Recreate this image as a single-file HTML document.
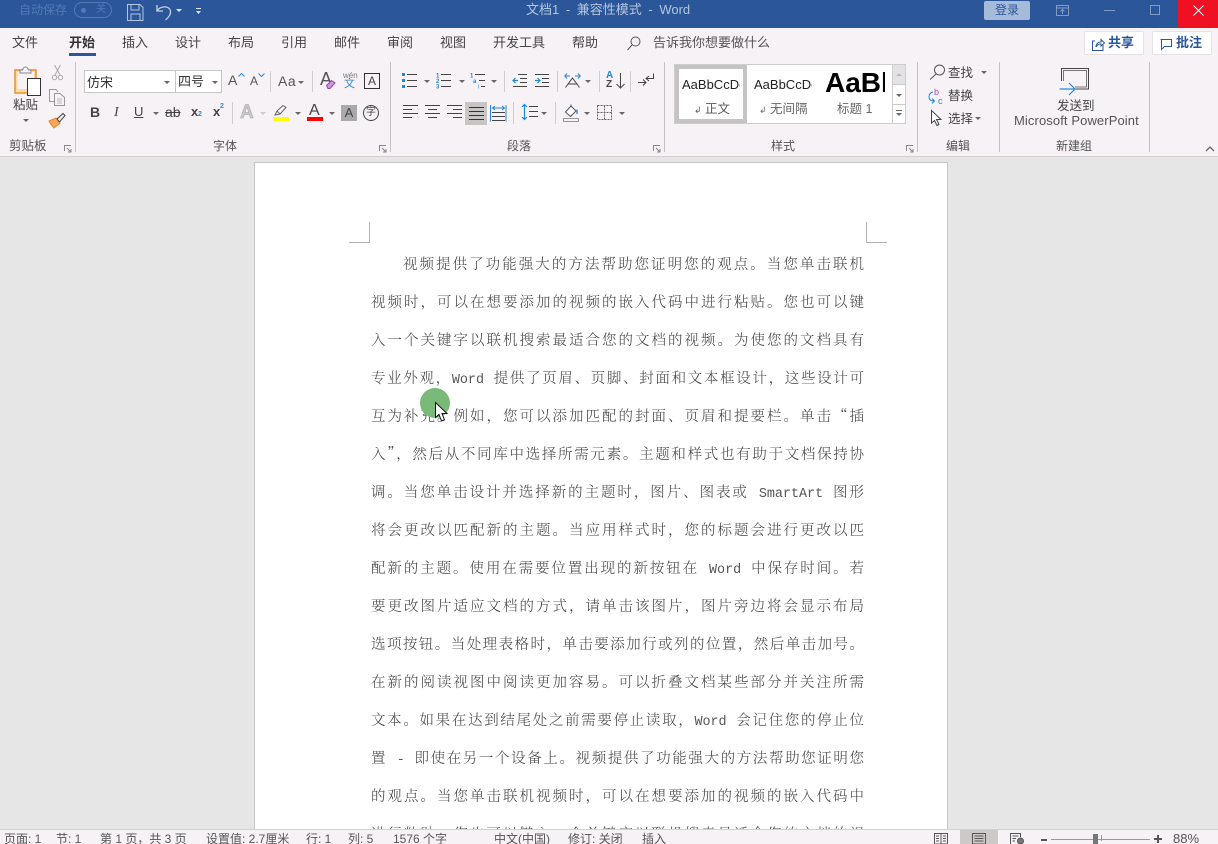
<!DOCTYPE html>
<html lang="zh"><head><meta charset="utf-8"><title>Word</title>
<style>
*{box-sizing:border-box}
html,body{margin:0;padding:0;width:1218px;height:844px;overflow:hidden;background:#e6e6e6}
body{position:relative;font-family:"Liberation Sans","Noto Sans CJK SC",sans-serif;color:#444}
.a{position:absolute;white-space:nowrap}
.t{position:absolute;white-space:nowrap;font-size:12.500px;line-height:16px;color:#444}
.tab{position:absolute;top:34px;font-size:13px;line-height:17px;color:#444;white-space:nowrap}
.sep{position:absolute;top:62px;height:90px;width:1px;background:#c6c2c2}
.s2{position:absolute;width:1px;background:#d0cccc}
.l{position:absolute;left:371px;width:494px;height:20px;line-height:20px;font-family:"Noto Serif CJK SC",serif;font-size:14.500px;color:#444;text-align:justify;text-align-last:justify;white-space:nowrap;font-weight:300}
.m{font-family:"Liberation Mono",monospace;font-size:13.400px;color:#555;font-weight:400}
svg{position:absolute;overflow:visible}
.st{position:absolute;top:832px;font-size:12px;line-height:14px;color:#555;white-space:nowrap}
.gl{position:absolute;top:138px;font-size:12px;line-height:16px;color:#555}
.car{position:absolute;width:0;height:0;border-left:3px solid transparent;border-right:3px solid transparent;border-top:3px solid #666}
</style></head><body>

<!-- title bar -->
<div class="a" style="left:0;top:0;width:1218px;height:28px;background:#2b579a"></div>
<div class="a" style="left:19px;top:2px;font-size:12px;line-height:16px;color:#5279b4">自动保存</div>
<div class="a" style="left:74px;top:2px;width:38px;height:16px;border:1px solid #5279b4;border-radius:8px"></div>
<div class="a" style="left:81px;top:8px;width:5px;height:5px;border-radius:50%;background:#5279b4"></div>
<div class="a" style="left:96px;top:3px;font-size:10px;line-height:14px;color:#5279b4">关</div>
<svg style="left:127px;top:4px" width="17" height="17" fill="none" stroke="#b4c5de" stroke-width="1"><path d="M.5.5H13L16 3.500V16.500H.5Z"/><path d="M4 .5V6H12V.5M4 16.500V10H13V16.500"/></svg>
<svg style="left:156px;top:3px" width="18" height="18" fill="none" stroke="#c3d0e4" stroke-width="1.300"><path d="M1 2V8H7M1 8C4 3 13 2 14.500 8C15 12 12 15 9.500 17"/></svg>
<div class="car" style="left:176px;top:9px;border-top-color:#dfe6f0"></div>
<svg style="left:195px;top:7px" width="8" height="8" fill="#dfe6f0"><rect x="1" y="1" width="5" height="1"/><path d="M1 4H6L3.500 7Z"/></svg>
<div class="a" style="left:526px;top:1px;font-size:13px;line-height:18px;color:#b4c5de;word-spacing:3px">文档1 - 兼容性模式 - Word</div>
<div class="a" style="left:984px;top:1px;width:46px;height:19px;background:#a6bbd9;border-radius:2px;text-align:center;font-size:12px;line-height:19px;color:#2b579a">登录</div>
<svg style="left:1056px;top:5px" width="14" height="11" fill="none" stroke="#7f9cc6"><path d="M.5.5H12.500V10.500H.5ZM.5 3H12.500M6.500 9V4.500M4.500 6.500L6.500 4.500L8.500 6.500"/></svg>
<div class="a" style="left:1104px;top:10px;width:11px;height:1px;background:#7f9cc6"></div>
<div class="a" style="left:1150px;top:5px;width:10px;height:10px;border:1px solid #7f9cc6"></div>
<div class="a" style="left:1178px;top:0;width:40px;height:28px;background:#f01024"></div>
<svg style="left:1193px;top:5px" width="11" height="11" stroke="#fff" stroke-width="1"><path d="M.5.5L10.500 10.500M10.500.5L.5 10.500"/></svg>

<!-- ribbon -->
<div class="a" style="left:0;top:28px;width:1218px;height:128px;background:#f6f2f6"></div>
<div class="a" style="left:0;top:156px;width:1218px;height:1px;background:#d4d0d0"></div>

<div class="tab" style="left:12px">文件</div>
<div class="tab" style="left:69px;font-weight:700;color:#333">开始</div>
<div class="a" style="left:69px;top:53px;width:27px;height:3px;background:#2b579a"></div>
<div class="tab" style="left:122px">插入</div>
<div class="tab" style="left:175px">设计</div>
<div class="tab" style="left:228px">布局</div>
<div class="tab" style="left:281px">引用</div>
<div class="tab" style="left:334px">邮件</div>
<div class="tab" style="left:387px">审阅</div>
<div class="tab" style="left:440px">视图</div>
<div class="tab" style="left:493px">开发工具</div>
<div class="tab" style="left:572px">帮助</div>
<svg style="left:627px;top:36px" width="14" height="15" fill="none" stroke="#555"><circle cx="8.500" cy="5.500" r="4.500"/><path d="M5 9L.5 14"/></svg>
<div class="tab" style="left:653px;color:#555">告诉我你想要做什么</div>

<div class="a" style="left:1084px;top:31px;width:60px;height:24px;background:#fff;border:1px solid #e6e2e6;border-radius:2px"></div>
<svg style="left:1092px;top:38px" width="13" height="13" fill="none" stroke="#2b579a"><path d="M3 3H.5V12.500H11V7"/><path d="M4 9C4 6 6 4 9 4V1.500L12.500 5L9 8V6C7 6 5 7 4 9Z"/></svg>
<div class="a" style="left:1108px;top:34px;font-size:13px;line-height:17px;font-weight:700;color:#2b579a">共享</div>
<div class="a" style="left:1152px;top:31px;width:60px;height:24px;background:#fff;border:1px solid #e6e2e6;border-radius:2px"></div>
<svg style="left:1160px;top:39px" width="12" height="11" fill="none" stroke="#2b579a"><path d="M.5.5H11.500V7.500H4.500L1.500 10.500V.5"/></svg>
<div class="a" style="left:1176px;top:34px;font-size:13px;line-height:17px;font-weight:700;color:#2b579a">批注</div>

<!-- separators -->
<div class="sep" style="left:75px"></div>
<div class="sep" style="left:390px"></div>
<div class="sep" style="left:664px"></div>
<div class="sep" style="left:917px"></div>
<div class="sep" style="left:999px"></div>
<div class="sep" style="left:1149px"></div>

<!-- clipboard -->
<svg style="left:14px;top:66px" width="28" height="30" fill="none">
<path d="M1 4H22V27H1Z" fill="#fbd9a5" stroke="#ec8f2d" stroke-width="1.500"/><path d="M3.500 6H20V23H3.500Z" fill="#f6f2f6"/>
<path d="M6 7V4H8.500Q9.500 1 11.500 1Q13.500 1 14.500 4H17V7Z" fill="#f6f2f6" stroke="#888"/>
<rect x="13.500" y="12.500" width="13" height="17" fill="#fff" stroke="#333"/></svg>
<div class="t" style="left:13px;top:97px;font-size:12.500px">粘贴</div>
<div class="car" style="left:23px;top:119px"></div>
<svg style="left:52px;top:65px" width="11" height="16" fill="none" stroke="#aaa"><path d="M2.500 0L8 10M8.500 0L3 10"/><circle cx="2.500" cy="12.500" r="2.200"/><circle cx="8.500" cy="12.500" r="2.200"/></svg>
<svg style="left:49px;top:89px" width="17" height="17" fill="none" stroke="#999"><path d="M5 12.500H.5V.5H7L9 3"/><path d="M5.500 4.500H11L15.500 8.500V16.500H5.500Z"/><path d="M8 10H13M8 12H13M8 14H13" stroke="#bbb"/></svg>
<svg style="left:49px;top:113px" width="17" height="16" fill="none"><path d="M0 8L7 5L11 10L5 15Q2 12 0 8Z" fill="#f8a85c" stroke="#e8872a"/><path d="M8 6L14 .5L16 2.500L10.500 9Z" fill="#f6f2f6" stroke="#444"/></svg>
<div class="gl" style="left:9px;font-size:12.500px">剪贴板</div>
<svg style="left:64px;top:145px" width="8" height="8" fill="none" stroke="#888"><path d="M.5 6V.5H7"/><path d="M3 3L7 7M7 4V7H4"/></svg>

<!-- font -->
<div class="a" style="left:84px;top:70px;width:92px;height:23px;background:#fff;border:1px solid #c6c6c6"></div>
<div class="a" style="left:175px;top:70px;width:47px;height:23px;background:#fff;border:1px solid #c6c6c6"></div>
<div class="t" style="left:87px;top:74px;font-family:'Noto Sans CJK SC',sans-serif;font-size:13px;color:#333">仿宋</div>
<div class="car" style="left:164px;top:81px"></div>
<div class="t" style="left:178px;top:74px;font-size:13px;color:#333">四号</div>
<div class="car" style="left:212px;top:81px"></div>
<div class="t" style="left:228px;top:72px;font-size:14px;color:#555">A</div><svg style="left:238px;top:73px" width="7" height="4" fill="none" stroke="#2b8bd6"><path d="M.5 3.500L3.500 .5L6.500 3.500"/></svg>
<div class="t" style="left:250px;top:73px;font-size:12px;color:#555">A</div><svg style="left:258px;top:73px" width="7" height="4" fill="none" stroke="#2b8bd6"><path d="M.5 .5L3.500 3.500L6.500 .5"/></svg>
<div class="s2" style="left:270px;top:71px;height:21px"></div>
<div class="t" style="left:278px;top:73px;font-size:14px;color:#555;letter-spacing:.5px">Aa</div>
<div class="car" style="left:298px;top:81px"></div>
<div class="s2" style="left:312px;top:71px;height:21px"></div>
<div class="t" style="left:320px;top:71px;font-size:18px;color:#555">A</div>
<svg style="left:326px;top:80px" width="10" height="9" fill="#c89ad8" stroke="#9b3fb5"><path d="M.5 5.500L5.500 .5L9 3L4 8.500H2Z"/></svg>
<div class="t" style="left:343px;top:71px;font-size:8px;line-height:9px;color:#777">wén</div>
<div class="t" style="left:344px;top:78px;font-size:11px;line-height:12px;color:#2b8bd6">文</div>
<div class="a" style="left:364px;top:73px;width:16px;height:16px;border:1px solid #333;font-size:12px;line-height:14px;text-align:center;color:#444">A</div>

<div class="t" style="left:90px;top:104px;font-weight:700;font-size:14px;color:#444">B</div>
<div class="t" style="left:114px;top:105px;font-family:'Liberation Serif',serif;font-style:italic;font-size:14px">I</div>
<div class="t" style="left:134px;top:104px;font-size:13px;text-decoration:underline;color:#444">U</div>
<div class="car" style="left:153px;top:112px"></div>
<div class="t" style="left:165px;top:104px;text-decoration:line-through;font-size:14px">ab</div>
<div class="t" style="left:191px;top:104px;font-weight:700;font-size:13px">x</div><div class="t" style="left:198px;top:111px;font-size:7px;line-height:8px;color:#2b8bd6;font-weight:700">2</div>
<div class="t" style="left:213px;top:104px;font-weight:700;font-size:13px">x</div><div class="t" style="left:220px;top:103px;font-size:7px;line-height:8px;color:#2b8bd6;font-weight:700">2</div>
<div class="s2" style="left:232px;top:102px;height:22px"></div>
<div class="t" style="left:240px;top:103px;font-size:19px;line-height:20px;font-weight:700;color:#c8c8c8;-webkit-text-stroke:.5px #a8a8a8">A</div>
<div class="car" style="left:260px;top:112px;border-top-color:#ccc"></div>
<svg style="left:273px;top:105px" width="16" height="12" fill="none" stroke="#666"><path d="M2 10L4 6L10 .5L13 2.500L7 9Z" fill="#f6f2f6"/><path d="M4 6L7 9"/></svg>
<div class="a" style="left:273px;top:117px;width:16px;height:4px;background:#ff0"></div>
<div class="car" style="left:295px;top:112px"></div>
<div class="t" style="left:309px;top:103px;font-size:16px;color:#444">A</div>
<div class="a" style="left:307px;top:117px;width:16px;height:4px;background:#f00"></div>
<div class="car" style="left:329px;top:112px"></div>
<div class="a" style="left:341px;top:105px;width:16px;height:16px;background:#aaa;font-size:13px;line-height:16px;text-align:center;color:#444">A</div>
<div class="a" style="left:363px;top:105px;width:16px;height:16px;border:1px solid #444;border-radius:50%;font-size:10px;line-height:14px;text-align:center;color:#444">字</div>
<div class="gl" style="left:213px">字体</div>
<svg style="left:379px;top:145px" width="8" height="8" fill="none" stroke="#888"><path d="M.5 6V.5H7"/><path d="M3 3L7 7M7 4V7H4"/></svg>

<!-- paragraph row1 -->
<svg style="left:402px;top:72px" width="15" height="16"><g fill="#1e88d8"><rect y="1" width="3" height="3"/><rect y="7" width="3" height="3"/><rect y="13" width="3" height="3"/></g><path d="M5 2.500H15M5 8.500H15M5 14.500H15" stroke="#444"/></svg>
<div class="car" style="left:424px;top:80px"></div>
<svg style="left:436px;top:72px" width="16" height="16"><text x="0" y="5.500" font-size="6" fill="#1e88d8" font-family="Liberation Sans" font-weight="700">1</text><text x="0" y="11" font-size="6" fill="#1e88d8" font-family="Liberation Sans" font-weight="700">2</text><text x="0" y="16.500" font-size="6" fill="#1e88d8" font-family="Liberation Sans" font-weight="700">3</text><path d="M5 2.500H15M5 8.500H15M5 14.500H15" stroke="#444"/></svg>
<div class="car" style="left:459px;top:80px"></div>
<svg style="left:470px;top:72px" width="16" height="16"><text x="0" y="5.500" font-size="6" fill="#1e88d8" font-family="Liberation Sans" font-weight="700">1</text><text x="3" y="11" font-size="6" fill="#1e88d8" font-family="Liberation Sans" font-weight="700">a</text><text x="8" y="16.500" font-size="6" fill="#1e88d8" font-family="Liberation Sans">i</text><path d="M5 2.500H15M9 8.500H15M11 14.500H15" stroke="#444"/></svg>
<div class="car" style="left:491px;top:80px"></div>
<div class="s2" style="left:504px;top:71px;height:21px"></div>
<svg style="left:512px;top:73px" width="15" height="14" fill="none"><path d="M6 1.500H15M8 5.500H15M8 9.500H15M1 13.500H15" stroke="#444"/><path d="M6 7.500H1M3.500 5L1 7.500L3.500 10" stroke="#1e88d8" stroke-width="1.200"/></svg>
<svg style="left:534px;top:73px" width="15" height="14" fill="none"><path d="M1 1.500H15M8 5.500H15M8 9.500H15M1 13.500H15" stroke="#444"/><path d="M1 7.500H6M3.500 5L6 7.500L3.500 10" stroke="#1e88d8" stroke-width="1.200"/></svg>
<div class="s2" style="left:557px;top:71px;height:21px"></div>
<svg style="left:564px;top:73px" width="18" height="15" fill="none"><path d="M1.500 14.500L8.500 5L15.500 14.500M4 11H13" stroke="#444"/><path d="M1 3H6M3 .5L.8 3L3 5.500M11 3H16M14 .5L16.200 3L14 5.500" stroke="#1e88d8"/></svg>
<div class="car" style="left:585px;top:80px"></div>
<div class="s2" style="left:599px;top:71px;height:21px"></div>
<div class="t" style="left:606px;top:71px;font-size:10px;line-height:10px;color:#1e88d8;font-weight:700">A</div>
<div class="t" style="left:606px;top:80px;font-size:10px;line-height:10px;color:#444;font-weight:700">Z</div>
<svg style="left:616px;top:73px" width="9" height="16" fill="none" stroke="#444"><path d="M4.500 0V15M.5 11L4.500 15L8.500 11"/></svg>
<div class="s2" style="left:630px;top:71px;height:21px"></div>
<svg style="left:638px;top:73px" width="18" height="15" fill="none" stroke="#444"><path d="M8 5.500H15.500V.5M11 3L8 5.500L11 8" /><path d="M0 9.500H8M5 6.500L8 9.500L5 12.500"/></svg>

<!-- paragraph row2 -->
<svg style="left:403px;top:104px" width="15" height="15" stroke="#444"><path d="M0 1.500H15M0 5.500H9M0 9.500H15M0 13.500H9"/></svg>
<svg style="left:425px;top:104px" width="15" height="15" stroke="#444"><path d="M0 1.500H15M3 5.500H12M0 9.500H15M3 13.500H12"/></svg>
<svg style="left:447px;top:104px" width="15" height="15" stroke="#444"><path d="M0 1.500H15M6 5.500H15M0 9.500H15M6 13.500H15"/></svg>
<div class="a" style="left:465px;top:102px;width:22px;height:23px;background:#c9c5c5"></div>
<svg style="left:469px;top:106px" width="15" height="14" stroke="#333"><path d="M0 1.500H15M0 5.500H15M0 9.500H15M0 13.500H15"/></svg>
<svg style="left:490px;top:105px" width="17" height="17" fill="none"><path d="M.5 0V16.500M16 0V16.500" stroke="#1e88d8"/><path d="M3 3H14M5 1L2.500 3L5 5M12 1L14.500 3L12 5" stroke="#1e88d8"/><path d="M2 7.500H15M2 11.500H15M2 15.500H15" stroke="#444"/></svg>
<div class="s2" style="left:513px;top:102px;height:22px"></div>
<svg style="left:521px;top:104px" width="18" height="18" fill="none"><path d="M3.500 0V16M1 3L3.500 .5L6 3M1 13L3.500 15.500L6 13" stroke="#1e88d8" stroke-width="1.200"/><path d="M8 2.500H17M8 7.500H17M8 12.500H17" stroke="#444"/></svg>
<div class="car" style="left:541px;top:112px"></div>
<div class="s2" style="left:555px;top:102px;height:22px"></div>
<svg style="left:563px;top:104px" width="17" height="18" fill="none"><path d="M2.500 8L8 2L13 7L7.500 12.500Z" fill="#fff" stroke="#555"/><path d="M8 2V.5M14 5.500V10" stroke="#1e88d8" stroke-width="1.300"/><rect x=".5" y="14.500" width="15" height="3" fill="#f6f2f6" stroke="#999"/></svg>
<div class="car" style="left:584px;top:112px"></div>
<svg style="left:597px;top:105px" width="15" height="15" fill="none" stroke="#666" stroke-dasharray="2 1"><path d="M.5.5H14.500V14.500H.5ZM7.500.5V14.500M.5 7.500H14.500"/></svg>
<div class="car" style="left:619px;top:112px"></div>
<div class="gl" style="left:507px">段落</div>
<svg style="left:653px;top:145px" width="8" height="8" fill="none" stroke="#888"><path d="M.5 6V.5H7"/><path d="M3 3L7 7M7 4V7H4"/></svg>

<!-- styles -->
<div class="a" style="left:674px;top:64px;width:219px;height:60px;background:#fff;border:1px solid #d0cccc"></div>
<div class="a" style="left:675px;top:65px;width:72px;height:58px;border:4px solid #c4c4c4;background:#fff"></div>
<div class="a" style="left:682px;top:77px;width:58px;overflow:hidden;font-size:13px;line-height:15px;color:#222">AaBbCcDdE</div>
<div class="a" style="left:754px;top:77px;width:58px;overflow:hidden;font-size:13px;line-height:15px;color:#222">AaBbCcDdE</div>
<div class="a" style="left:825px;top:67px;width:60px;overflow:hidden;font-size:28px;line-height:32px;font-weight:700;color:#000">AaBbC</div>
<div class="t" style="left:694px;top:101px;color:#555"><span style="font-size:9px">↲</span> 正文</div>
<div class="t" style="left:759px;top:101px;color:#666"><span style="font-size:9px">↲</span> 无间隔</div>
<div class="t" style="left:837px;top:101px;color:#666">标题 1</div>
<div class="a" style="left:892px;top:64px;width:14px;height:60px;background:#fff;border:1px solid #d0cccc"></div>
<div class="a" style="left:893px;top:65px;width:12px;height:20px;background:#e4e2e4;border-bottom:1px solid #d0cccc"></div>
<div class="a" style="left:893px;top:104px;width:12px;height:1px;background:#d0cccc"></div>
<div class="car" style="left:896px;top:73px;border-top:0;border-bottom:3px solid #bbb"></div>
<div class="car" style="left:896px;top:94px"></div>
<div class="a" style="left:896px;top:110px;width:6px;height:1px;background:#666"></div>
<div class="car" style="left:896px;top:113px"></div>
<div class="gl" style="left:771px">样式</div>
<svg style="left:906px;top:145px" width="8" height="8" fill="none" stroke="#888"><path d="M.5 6V.5H7"/><path d="M3 3L7 7M7 4V7H4"/></svg>

<!-- editing -->
<svg style="left:929px;top:64px" width="17" height="16" fill="none" stroke="#555"><circle cx="10.500" cy="6" r="5"/><path d="M7 10L1 15.500"/></svg>
<div class="t" style="left:948px;top:65px">查找</div>
<div class="car" style="left:981px;top:71px"></div>
<svg style="left:928px;top:87px" width="17" height="18" fill="none"><text x="6" y="8" font-size="9" fill="#b04fc0" font-family="Liberation Sans">b</text><text x="10" y="17" font-size="9" fill="#1e88d8" font-family="Liberation Sans">c</text><path d="M5 5Q1 6 1 10Q1 14 6 14M4 11.500L6.500 14L4 16.500" stroke="#1e88d8"/></svg>
<div class="t" style="left:948px;top:88px">替换</div>
<svg style="left:931px;top:110px" width="11" height="16" fill="#fff" stroke="#444"><path d="M.5.5V13L3.500 10.500L6 15.500L8 14.500L5.500 9.500H10Z"/></svg>
<div class="t" style="left:948px;top:111px">选择</div>
<div class="car" style="left:975px;top:117px"></div>
<div class="gl" style="left:946px">编辑</div>

<!-- new group -->
<svg style="left:1059px;top:68px" width="32" height="30" fill="none"><path d="M2.500 13V.5H29.500V21H16" stroke="#444"/><path d="M4.500 13V2.500H27.500V19H16" stroke="#777"/><path d="M.5 21H15M10 15L16 21L10 27" stroke="#2b8bd6" stroke-width="1.200" /></svg>
<div class="t" style="left:1057px;top:98px">发送到</div>
<div class="t" style="left:1014px;top:113px;font-size:13px;letter-spacing:.1px;color:#555">Microsoft PowerPoint</div>
<div class="gl" style="left:1056px">新建组</div>
<svg style="left:1205px;top:146px" width="10" height="6" fill="none" stroke="#666" stroke-width="1.300"><path d="M1 5L5 1L9 5"/></svg>

<!-- document -->
<div class="a" style="left:254px;top:162px;width:694px;height:680px;background:#fff;border:1px solid #c6c6c6"></div>
<svg style="left:349px;top:222px" width="22" height="21" fill="none" stroke="#b0b0b0"><path d="M0 20.500H20.500V0"/></svg>
<svg style="left:866px;top:222px" width="22" height="21" fill="none" stroke="#b0b0b0"><path d="M.5 0V20.500H21"/></svg>

<div class="l" style="left:403px;width:461px;top:254px">视频提供了功能强大的方法帮助您证明您的观点。当您单击联机</div>
<div class="l" style="width:493px;top:292px">视频时，可以在想要添加的视频的嵌入代码中进行粘贴。您也可以键</div>
<div class="l" style="width:493px;top:330px">入一个关键字以联机搜索最适合您的文档的视频。为使您的文档具有</div>
<div class="l" style="width:493px;top:368px">专业外观，<span class="m">Word </span>提供了页眉、页脚、封面和文本框设计，这些设计可</div>
<div class="l" style="width:493px;top:406px">互为补充。例如，您可以添加匹配的封面、页眉和提要栏。单击“插</div>
<div class="l" style="width:493px;top:444px">入”，然后从不同库中选择所需元素。主题和样式也有助于文档保持协</div>
<div class="l" style="width:493px;top:482px">调。当您单击设计并选择新的主题时，图片、图表或<span class="m"> SmartArt </span>图形</div>
<div class="l" style="width:493px;top:520px">将会更改以匹配新的主题。当应用样式时，您的标题会进行更改以匹</div>
<div class="l" style="width:493px;top:558px">配新的主题。使用在需要位置出现的新按钮在<span class="m"> Word </span>中保存时间。若</div>
<div class="l" style="width:493px;top:596px">要更改图片适应文档的方式，请单击该图片，图片旁边将会显示布局</div>
<div class="l" style="width:493px;top:634px">选项按钮。当处理表格时，单击要添加行或列的位置，然后单击加号。</div>
<div class="l" style="width:493px;top:672px">在新的阅读视图中阅读更加容易。可以折叠文档某些部分并关注所需</div>
<div class="l" style="width:493px;top:710px">文本。如果在达到结尾处之前需要停止读取，<span class="m">Word </span>会记住您的停止位</div>
<div class="l" style="width:493px;top:748px">置<span class="m"> - </span>即使在另一个设备上。视频提供了功能强大的方法帮助您证明您</div>
<div class="l" style="width:493px;top:786px">的观点。当您单击联机视频时，可以在想要添加的视频的嵌入代码中</div>
<div class="l" style="width:493px;top:824px">进行粘贴。您也可以键入一个关键字以联机搜索最适合您的文档的视</div>

<!-- cursor highlight -->
<div class="a" style="left:420px;top:388px;width:30px;height:30px;border-radius:50%;background:#7aba78"></div>
<svg style="left:435px;top:402px" width="14" height="21" fill="#fff" stroke="#111"><path d="M.5.5V15.500L4 12.500L6.500 19L9.500 18L7 11.500H12Z"/></svg>

<!-- status bar -->
<div class="a" style="left:0;top:829px;width:1218px;height:15px;background:#f6f2f6;border-top:1px solid #d4d0d0"></div>
<div class="st" style="left:4px">页面: 1</div>
<div class="st" style="left:56px">节: 1</div>
<div class="st" style="left:100px">第 1 页，共 3 页</div>
<div class="st" style="left:206px">设置值: 2.7厘米</div>
<div class="st" style="left:306px">行: 1</div>
<div class="st" style="left:348px">列: 5</div>
<div class="st" style="left:393px">1576 个字</div>
<div class="st" style="left:494px">中文(中国)</div>
<div class="st" style="left:568px">修订: 关闭</div>
<div class="st" style="left:642px">插入</div>
<svg style="left:934px;top:833px" width="14" height="11" fill="none" stroke="#555"><path d="M.5.5H13.500V11H.5ZM7 .5V11M2 3H5M2 5.500H5M2 8H5M9 3H12M9 5.500H12M9 8H12"/></svg>
<div class="a" style="left:960px;top:830px;width:38px;height:14px;background:#cdc9c9"></div>
<svg style="left:972px;top:833px" width="14" height="11" fill="none" stroke="#555"><path d="M.5.5H13.500V11H.5ZM2.500 3H11.500M2.500 5.500H11.500M2.500 8H11.500"/></svg>
<svg style="left:1010px;top:833px" width="15" height="11" fill="none" stroke="#555"><path d="M.5 11V.5H10.500V4M2.500 3H8.500M2.500 5.500H6M2.500 8H5"/><circle cx="10.500" cy="8" r="3" fill="#777"/></svg>
<div class="a" style="left:1041px;top:839px;width:6px;height:2px;background:#555"></div>
<div class="a" style="left:1051px;top:839px;width:99px;height:1px;background:#999"></div>
<div class="a" style="left:1101px;top:835px;width:1px;height:6px;background:#999"></div>
<div class="a" style="left:1093px;top:834px;width:5px;height:10px;background:#777"></div>
<svg style="left:1154px;top:835px" width="8" height="8" stroke="#555" stroke-width="2"><path d="M0 4H8M4 0V8"/></svg>
<div class="st" style="left:1173px;top:832px;font-size:13px;color:#555">88%</div>

</body></html>
